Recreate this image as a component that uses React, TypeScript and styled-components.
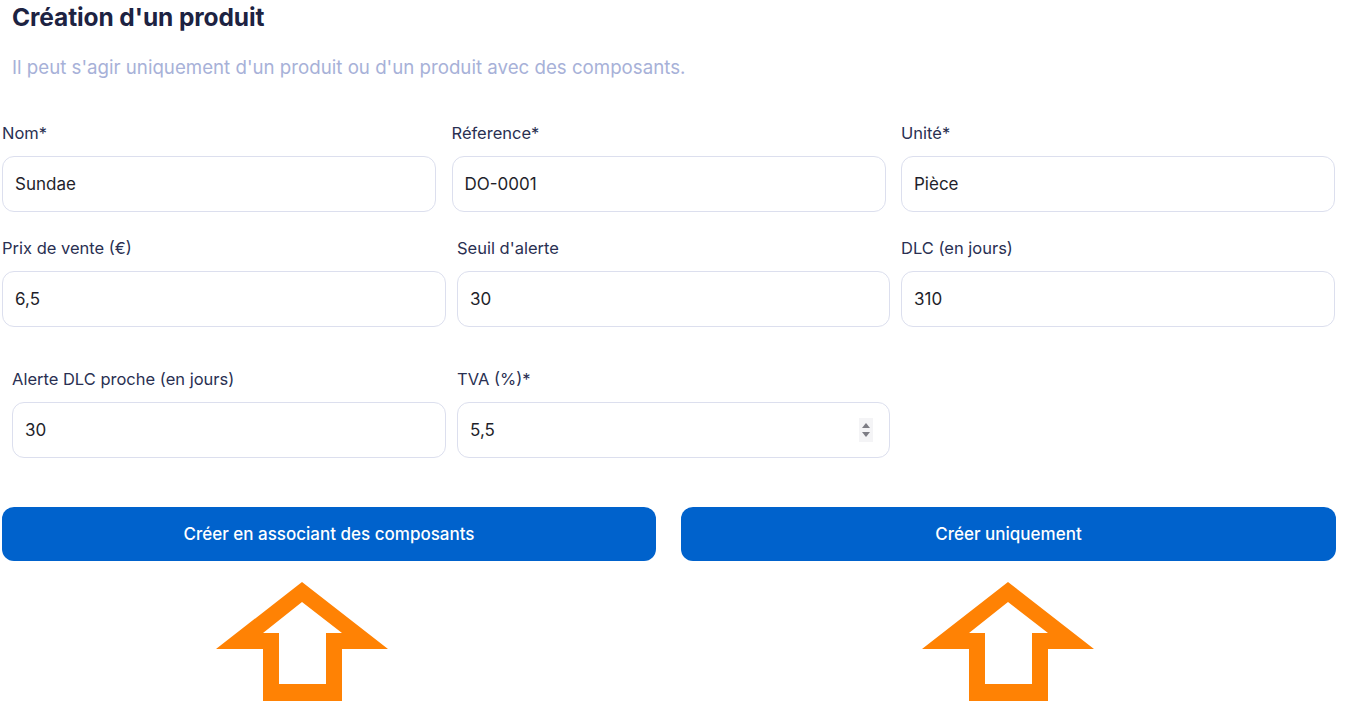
import React from "react";
import styled, { createGlobalStyle } from "styled-components";

const Global = createGlobalStyle`
  html, body { margin: 0; padding: 0; background: #ffffff; overflow: hidden; }
  body { font-family: "Inter", "Noto Sans", sans-serif; }
  * { box-sizing: border-box; }
`;

const Page = styled.div`
  width: 1351px;
  height: 701px;
  overflow: hidden;
  display: flex;
  flex-direction: column;
`;

const Title = styled.h1`
  margin: 3px 0 0 12px;
  font-size: 24.5px;
  line-height: 28px;
  font-weight: 700;
  color: #1d2342;
  letter-spacing: -0.1px;
`;

const Subtitle = styled.p`
  margin: 25px 0 0 12px;
  font-size: 18.7px;
  line-height: 24px;
  color: #a7b1d8;
  font-weight: 400;
`;

const Row = styled.div<{ $cols: string; $left: number; $gap: number; $top: number }>`
  display: grid;
  grid-template-columns: ${(p) => p.$cols};
  column-gap: ${(p) => p.$gap}px;
  margin-left: ${(p) => p.$left}px;
  margin-top: ${(p) => p.$top}px;
`;

const Field = styled.div`
  display: flex;
  flex-direction: column;
  gap: 13px;
`;

const Label = styled.label`
  font-size: 16.5px;
  line-height: 20px;
  color: #2a3052;
  font-weight: 400;
`;

const InputBox = styled.div`
  height: 56px;
  border: 1px solid #dcdfee;
  border-radius: 12px;
  display: flex;
  align-items: center;
  padding: 0 14px 0 12px;
  font-size: 17px;
  color: #1f1f2b;
`;

const Value = styled.span`
  flex: 1;
`;

const Spinner = styled.span`
  width: 14px;
  height: 24px;
  background: #f4f4f6;
  display: flex;
  align-items: center;
  justify-content: center;
  margin-right: 2px;
`;

const Buttons = styled.div`
  display: grid;
  grid-template-columns: 654px 655px;
  column-gap: 25px;
  margin: 49px 0 0 2px;
`;

const Button = styled.button`
  height: 54px;
  border: none;
  border-radius: 12px;
  background: #0062cc;
  color: #ffffff;
  font-family: inherit;
  font-size: 17px;
  font-weight: 500;
  cursor: pointer;
`;

const Arrows = styled.div`
  display: flex;
  margin-top: 21px;
  height: 130px;
`;

const Arrow = styled.svg<{ $left: number }>`
  display: block;
  margin-left: ${(p) => p.$left}px;
  flex: none;
`;

type FieldDef = { label: string; value: string; spin?: boolean };

const rows: { cols: string; left: number; gap: number; top: number; fields: FieldDef[] }[] = [
  {
    cols: "434px 434px 434px",
    left: 2,
    gap: 15.5,
    top: 43,
    fields: [
      { label: "Nom*", value: "Sundae" },
      { label: "Réference*", value: "DO-0001" },
      { label: "Unité*", value: "Pièce" },
    ],
  },
  {
    cols: "444px 433px 434px",
    left: 2,
    gap: 11,
    top: 26,
    fields: [
      { label: "Prix de vente (€)", value: "6,5" },
      { label: "Seuil d'alerte", value: "30" },
      { label: "DLC (en jours)", value: "310" },
    ],
  },
  {
    cols: "434px 433px",
    left: 12,
    gap: 11,
    top: 42,
    fields: [
      { label: "Alerte DLC proche (en jours)", value: "30" },
      { label: "TVA (%)*", value: "5,5", spin: true },
    ],
  },
];

const UpArrow: React.FC<{ left: number }> = ({ left }) => (
  <Arrow $left={left} width="172" height="120" viewBox="0 0 172 120">
    <path
      fillRule="evenodd"
      fill="#ff8204"
      d="M86 0 L172 67 L126 67 L126 120 L47 120 L47 67 L0 67 Z M86 20 L126 51 L110 51 L110 102 L63 102 L63 51 L47 51 Z"
    />
  </Arrow>
);

export default function App() {
  return (
    <Page>
      <Global />
      <Title>Création d'un produit</Title>
      <Subtitle>Il peut s'agir uniquement d'un produit ou d'un produit avec des composants.</Subtitle>
      {rows.map((r, i) => (
        <Row key={i} $cols={r.cols} $left={r.left} $gap={r.gap} $top={r.top}>
          {r.fields.map((f) => (
            <Field key={f.label}>
              <Label>{f.label}</Label>
              <InputBox>
                <Value>{f.value}</Value>
                {f.spin && (
                  <Spinner>
                    <svg width="10" height="18" viewBox="0 0 10 18">
                      <path d="M5 2 L9 7 L1 7 Z" fill="#7d7d85" />
                      <path d="M1 11 L9 11 L5 16 Z" fill="#7d7d85" />
                    </svg>
                  </Spinner>
                )}
              </InputBox>
            </Field>
          ))}
        </Row>
      ))}
      <Buttons>
        <Button>Créer en associant des composants</Button>
        <Button>Créer uniquement</Button>
      </Buttons>
      <Arrows>
        <UpArrow left={216} />
        <UpArrow left={534} />
      </Arrows>
    </Page>
  );
}
